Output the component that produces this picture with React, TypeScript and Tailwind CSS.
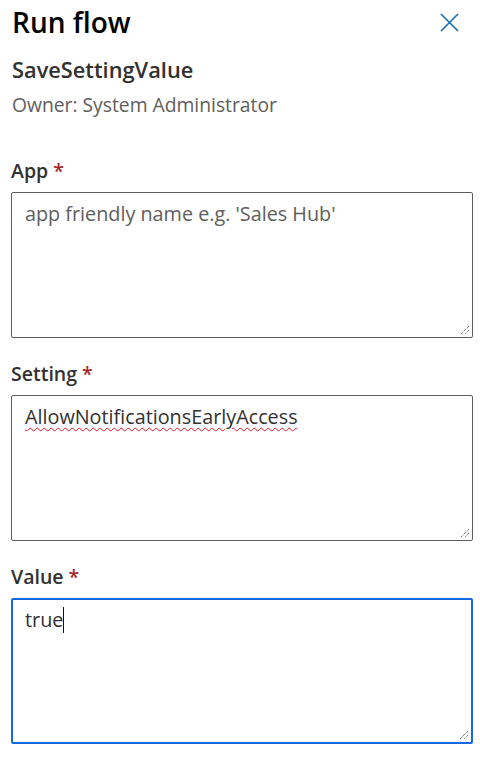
const font = "font-['Open_Sans','Noto_Sans',sans-serif]";

const Grip = () => (
  <svg
    className="absolute bottom-[2px] right-[2px]"
    width="11"
    height="11"
    viewBox="0 0 11 11"
  >
    <path d="M10 2 L2 10 M10 6 L6 10" stroke="#5f5f5f" strokeWidth="1" strokeDasharray="1.2 0.8" />
  </svg>
);

const Field = ({
  label,
  children,
  focused = false,
}: {
  label: string;
  children: React.ReactNode;
  focused?: boolean;
}) => (
  <div className="flex flex-col">
    <p className="text-[19.5px] font-semibold text-[#323130] leading-[26px]">
      {label} <span className="text-[#a4262c]">*</span>
    </p>
    <div
      className={`relative mt-[8px] h-[146px] rounded-[2px] text-[19.8px] leading-[28px] ${
        focused
          ? "border-2 border-[#1568e0] px-[12px] py-[6px]"
          : "border border-[#605e5c] px-[13px] py-[7px]"
      }`}
    >
      {children}
      <Grip />
    </div>
  </div>
);

export default function App() {
  return (
    <div className={`${font} w-[480px] h-[759px] bg-white pl-[11px] pr-[7px] overflow-hidden`}>
      {/* HEADER */}
      <div className="flex items-center justify-between pt-[2px]">
        <h1 className="text-[28px] font-semibold text-[#000] leading-[40px] pl-[1px]">Run flow</h1>
        <button className="mr-[14px] mt-[1px] text-[#0f6cbd]">
          <svg width="19" height="19" viewBox="0 0 19 19">
            <path d="M1 1 L18 18 M18 1 L1 18" stroke="currentColor" strokeWidth="1.6" />
          </svg>
        </button>
      </div>

      <p className="mt-[14px] pl-[1px] text-[21.8px] font-semibold text-[#323130] leading-[28px]">
        SaveSettingValue
      </p>
      <p className="mt-[8px] pl-[1px] text-[19.3px] text-[#605e5c] leading-[26px]">
        Owner: System Administrator
      </p>

      {/* FORM */}
      <div className="mt-[40px] flex flex-col gap-[23px]">
        <Field label="App">
          <span className="text-[#605e5c]">app friendly name e.g. 'Sales Hub'</span>
        </Field>
        <Field label="Setting">
          <span className="text-[#323130] underline decoration-wavy decoration-[#e81123] decoration-1 underline-offset-[3px]">
            AllowNotificationsEarlyAccess
          </span>
        </Field>
        <Field label="Value" focused>
          <span className="text-[#323130]">true</span>
          <span className="inline-block w-px h-[26px] bg-[#111] align-middle -mt-[3px]" />
        </Field>
      </div>
    </div>
  );
}
